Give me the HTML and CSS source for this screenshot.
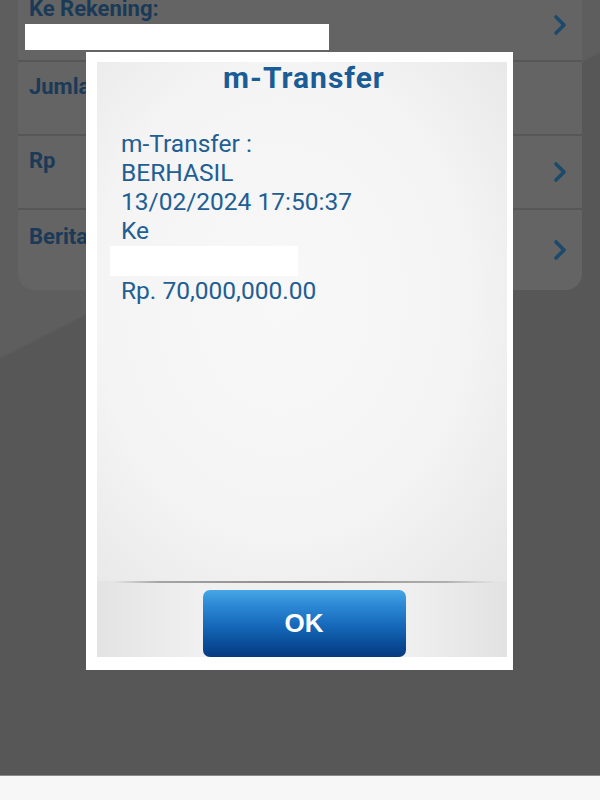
FILE: index.html
```html
<!DOCTYPE html>
<html>
<head>
<meta charset="utf-8">
<link rel="stylesheet" href="styles.css">
</head>
<body>
<div class="screen">
  <div class="card">
    <div class="row row-first">
      <div class="row-main">
        <div class="label">Ke Rekening:</div>
        <div class="redact redact-top"></div>
      </div>
      <svg class="chev" viewBox="0 0 14 22" width="14" height="22"><polyline points="3,3 11,11 3,19" fill="none" stroke="#1c4a6c" stroke-width="3.6" stroke-linecap="round" stroke-linejoin="round"/></svg>
    </div>
    <div class="row">
      <div class="label">Jumlah</div>
    </div>
    <div class="row">
      <div class="label">Rp</div>
      <svg class="chev" viewBox="0 0 14 22" width="14" height="22"><polyline points="3,3 11,11 3,19" fill="none" stroke="#1c4a6c" stroke-width="3.6" stroke-linecap="round" stroke-linejoin="round"/></svg>
    </div>
    <div class="row row-last">
      <div class="label">Berita</div>
      <svg class="chev" viewBox="0 0 14 22" width="14" height="22"><polyline points="3,3 11,11 3,19" fill="none" stroke="#1c4a6c" stroke-width="3.6" stroke-linecap="round" stroke-linejoin="round"/></svg>
    </div>
  </div>

  <div class="dialog">
    <div class="panel">
      <div class="title">m-Transfer</div>
      <div class="body">
        <div class="line">m-Transfer :</div>
        <div class="line">BERHASIL</div>
        <div class="line">13/02/2024 17:50:37</div>
        <div class="line">Ke</div>
        <div class="redact redact-body"></div>
        <div class="line">Rp. 70,000,000.00</div>
      </div>
      <div class="footer">
        <button class="ok">OK</button>
      </div>
    </div>
  </div>
</div>
<div class="bottom"></div>
</body>
</html>
```
FILE: styles.css
```css
html, body {
  margin: 0;
  padding: 0;
}
body {
  width: 600px;
  height: 800px;
  overflow: hidden;
  background: #f7f7f7;
  font-family: Roboto, "Noto Sans", sans-serif;
}
.screen {
  position: relative;
  height: 776px;
  overflow: hidden;
  background: linear-gradient(153deg, #5e5e5e 0%, #5e5e5e 33%, #575757 33.3%, #575757 100%);
  border-bottom: 1px solid #8a8a8a;
  box-sizing: border-box;
}
.card {
  margin: -12px 18px 0 18px;
  background: #646464;
  border-radius: 0 0 16px 16px;
  display: flex;
  flex-direction: column;
}
.row {
  height: 74px;
  box-sizing: border-box;
  padding: 13px 15px 0 11px;
  display: flex;
  justify-content: space-between;
  align-items: flex-start;
  border-bottom: 2px solid #575757;
}
.row-first {
  height: 74px;
  padding-top: 9px;
}
.row-last {
  height: 80px;
  border-bottom: none;
  padding-top: 15px;
}
.row-main {
  display: flex;
  flex-direction: column;
}
.label {
  font-size: 22px;
  font-weight: 700;
  color: #1a3a58;
  line-height: 24px;
}
.redact {
  background: #ffffff;
}
.redact-top {
  width: 304px;
  height: 26px;
  margin-left: -4px;
  margin-top: 3px;
}
.chev {
  align-self: center;
  margin-top: -14px;
}
.row-first .chev {
  margin-top: -8px;
}
.row-last .chev {
  margin-top: -16px;
}
.dialog {
  position: absolute;
  left: 86px;
  top: 52px;
  width: 427px;
  height: 618px;
  box-sizing: border-box;
  background: #ffffff;
  padding: 10px 6px 13px 11px;
}
.panel {
  height: 100%;
  display: flex;
  flex-direction: column;
  background: radial-gradient(ellipse 75% 65% at 45% 40%, #f8f8f8 0%, #f4f4f4 60%, #e7e7e7 100%);
}
.title {
  height: 32px;
  line-height: 32px;
  text-align: center;
  font-size: 30px;
  font-weight: 700;
  letter-spacing: 1px;
  color: #1a5d96;
  margin-left: 4px;
}
.body {
  flex: 1;
  padding: 35px 0 0 24px;
  color: #215e93;
  font-size: 24.5px;
}
.line {
  line-height: 29px;
  height: 29px;
}
.redact-body {
  width: 188px;
  height: 30px;
  margin-left: -11px;
  margin-top: 1px;
}
.footer {
  height: 76px;
  border-top: 2px solid transparent;
  border-image: linear-gradient(90deg, rgba(150,150,150,0) 0%, rgba(150,150,150,0) 4%, #a5a5a5 15%, #8a8a8a 50%, #b0b0b0 85%, rgba(150,150,150,0) 97%) 1;
  background: linear-gradient(90deg, #e3e3e3 0%, #f0f0f0 25%, #f0f0f0 75%, #e2e2e2 100%);
  display: flex;
  justify-content: center;
  align-items: flex-end;
  box-sizing: border-box;
  padding-left: 4px;
}
.ok {
  width: 203px;
  height: 67px;
  border: none;
  border-radius: 7px;
  background: linear-gradient(180deg, #45a6e6 0%, #2a86d3 25%, #1567b8 55%, #0a4d98 80%, #063a80 100%);
  color: #ffffff;
  font-family: "Liberation Sans", Arial, sans-serif;
  font-weight: 700;
  font-size: 26px;
  padding: 0;
  margin: 0;
}
.bottom {
  height: 24px;
}
```
